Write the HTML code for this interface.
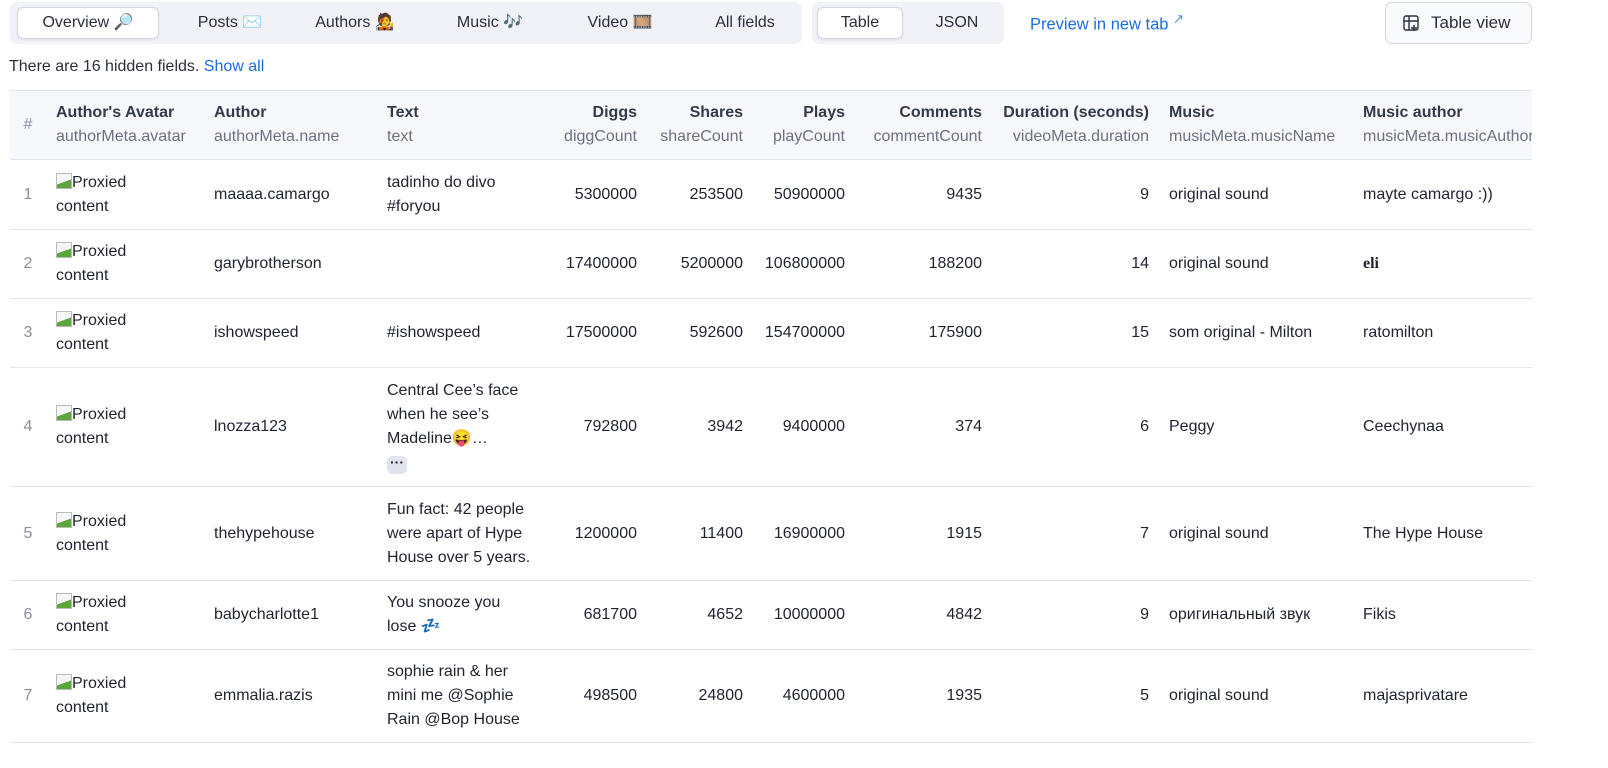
<!DOCTYPE html>
<html><head><meta charset="utf-8"><style>
*{box-sizing:border-box;margin:0;padding:0}
body{width:1608px;height:768px;overflow:hidden;background:#fff;font-family:"Liberation Sans","Noto Sans CJK SC",sans-serif;font-size:16px;color:#1f2330;position:relative}
.grp{position:absolute;top:2px;height:42px;background:#f1f2f7;border-radius:7px}
.tab{position:absolute;top:5px;height:32px;line-height:32px;text-align:center;font-size:16px;color:#2a2f3d}
.tab.act{background:#fff;border:1px solid #d3d6e0;border-radius:6px;box-shadow:0 1px 2px rgba(0,0,0,.08);line-height:30px}
.link{color:#1a6fe0}
table{position:absolute;left:10px;top:90px;border-collapse:collapse;table-layout:fixed;width:1522px}
td,th{padding:0 10px;vertical-align:middle;line-height:24px;border-bottom:1px solid #e3e5ec;overflow:hidden;white-space:nowrap}
th{background:#f7f8fb;text-align:left;font-weight:bold;color:#343a4a;height:69px;border-top:1px solid #e3e5ec}
th span{display:block;font-weight:normal;color:#6b7180}
.r{text-align:right}
td.n,th.n{color:#8a8f9c;font-weight:normal;text-align:center;padding:0}
.w{white-space:normal}
.img{display:inline-block;width:16px;height:16px;vertical-align:-2px;background:linear-gradient(160deg,#f4f6f8 55%,#5aa63a 56%);border:1px solid #bbb}
.more{display:inline-block;background:#e1e4ee;border-radius:5px;width:20px;height:18px;line-height:12px;text-align:center;font-weight:bold;font-size:14px}
</style></head><body>
<div class="grp" style="left:10px;width:792px">
<div class="tab act" style="left:7px;width:142px">Overview 🔎</div>
<div class="tab" style="left:170px;width:100px">Posts ✉️</div>
<div class="tab" style="left:290px;width:110px">Authors 🧑‍🎤</div>
<div class="tab" style="left:430px;width:100px">Music 🎶</div>
<div class="tab" style="left:560px;width:100px">Video 🎞️</div>
<div class="tab" style="left:690px;width:90px">All fields</div>
</div>
<div class="grp" style="left:812px;width:192px">
<div class="tab act" style="left:5px;width:86px">Table</div>
<div class="tab" style="left:105px;width:80px">JSON</div>
</div>
<div style="position:absolute;left:1030px;top:11px;font-size:16.5px" class="link">Preview in new tab <sup style="font-size:11px">↗</sup></div>
<div style="position:absolute;left:1385px;top:2px;width:147px;height:42px;border:1px solid #d3d6e0;border-radius:7px;background:#f9fafc;line-height:40px;font-size:17px;color:#2a2f3d">
<svg style="position:absolute;left:17px;top:12px" width="17" height="17" viewBox="0 0 17 17" fill="none" stroke="#2a2f3d" stroke-width="1.4"><rect x="1" y="1" width="14" height="14" rx="2"/><path d="M1 6h14M6 1v14M11 10v6M8 13h6"/></svg>
<span style="position:absolute;left:45px">Table view</span></div>
<div style="position:absolute;left:9px;top:58px;font-size:16px;color:#2a2f3d">There are 16 hidden fields. <span class="link">Show all</span></div>
<table>
<colgroup><col style="width:36px"><col style="width:158px"><col style="width:173px"><col style="width:170px"><col style="width:100px"><col style="width:106px"><col style="width:102px"><col style="width:137px"><col style="width:167px"><col style="width:194px"><col style="width:179px"></colgroup>
<tr><th class="n">#</th><th>Author's Avatar<span>authorMeta.avatar</span></th><th>Author<span>authorMeta.name</span></th><th>Text<span>text</span></th><th class="r">Diggs<span>diggCount</span></th><th class="r">Shares<span>shareCount</span></th><th class="r">Plays<span>playCount</span></th><th class="r">Comments<span>commentCount</span></th><th class="r">Duration (seconds)<span>videoMeta.duration</span></th><th>Music<span>musicMeta.musicName</span></th><th>Music author<span>musicMeta.musicAuthor</span></th></tr>
<tr style="height:70px"><td class="n">1</td><td><span class="img"></span>Proxied<br>content</td><td>maaaa.camargo</td><td class="w">tadinho do divo #foryou</td><td class="r">5300000</td><td class="r">253500</td><td class="r">50900000</td><td class="r">9435</td><td class="r">9</td><td>original sound</td><td>mayte camargo :))</td></tr>
<tr style="height:69px"><td class="n">2</td><td><span class="img"></span>Proxied<br>content</td><td>garybrotherson</td><td></td><td class="r">17400000</td><td class="r">5200000</td><td class="r">106800000</td><td class="r">188200</td><td class="r">14</td><td>original sound</td><td style="font-family:'Liberation Serif',serif;font-weight:bold">eli</td></tr>
<tr style="height:69px"><td class="n">3</td><td><span class="img"></span>Proxied<br>content</td><td>ishowspeed</td><td>#ishowspeed</td><td class="r">17500000</td><td class="r">592600</td><td class="r">154700000</td><td class="r">175900</td><td class="r">15</td><td>som original - Milton</td><td>ratomilton</td></tr>
<tr style="height:119px"><td class="n">4</td><td><span class="img"></span>Proxied<br>content</td><td>lnozza123</td><td class="w">Central Cee’s face when he see’s Madeline😝…<br><span class="more">···</span></td><td class="r">792800</td><td class="r">3942</td><td class="r">9400000</td><td class="r">374</td><td class="r">6</td><td>Peggy</td><td>Ceechynaa</td></tr>
<tr style="height:94px"><td class="n">5</td><td><span class="img"></span>Proxied<br>content</td><td>thehypehouse</td><td class="w">Fun fact: 42 people were apart of Hype House over 5 years.</td><td class="r">1200000</td><td class="r">11400</td><td class="r">16900000</td><td class="r">1915</td><td class="r">7</td><td>original sound</td><td>The Hype House</td></tr>
<tr style="height:69px"><td class="n">6</td><td><span class="img"></span>Proxied<br>content</td><td>babycharlotte1</td><td>You snooze you<br>lose 💤</td><td class="r">681700</td><td class="r">4652</td><td class="r">10000000</td><td class="r">4842</td><td class="r">9</td><td>оригинальный звук</td><td>Fikis</td></tr>
<tr style="height:93px"><td class="n">7</td><td><span class="img"></span>Proxied<br>content</td><td>emmalia.razis</td><td class="w">sophie rain &amp; her mini me @Sophie Rain @Bop House</td><td class="r">498500</td><td class="r">24800</td><td class="r">4600000</td><td class="r">1935</td><td class="r">5</td><td>original sound</td><td>majasprivatare</td></tr>
</table>
</body></html>
